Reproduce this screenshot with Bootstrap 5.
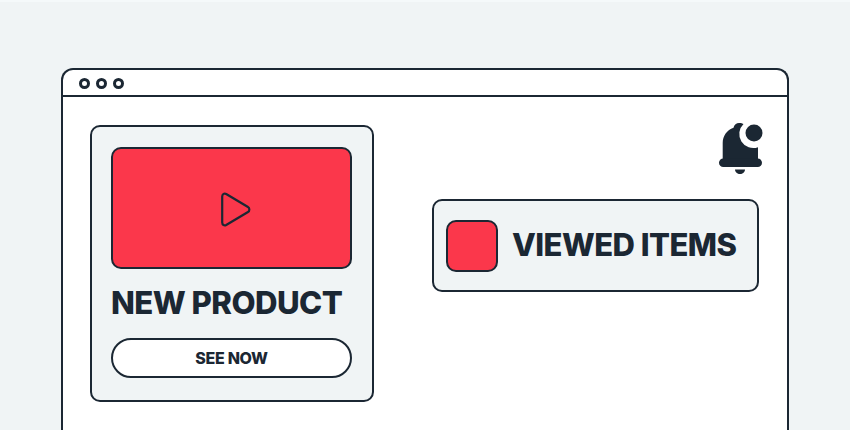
<!DOCTYPE html>
<html lang="en">

<head>
    <meta charset="UTF-8">
    <meta name="viewport" content="width=device-width, initial-scale=1.0">
    <title>Product notification</title>
    <link href="https://cdn.jsdelivr.net/npm/bootstrap@5.3.3/dist/css/bootstrap.min.css" rel="stylesheet">
    <style>
        html, body {
            height: 430px;
            overflow: hidden;
        }

        body {
            background-color: #f0f4f5;
            font-family: Inter, "Liberation Sans", sans-serif;
            color: #1b2733;
            padding: 66px 61px 0;
            border-top: 2px solid #f5f9fa;
        }

        .app-window {
            width: 728px;
            height: 362px;
            background: #fff;
            border: 2px solid #1b2733;
            border-bottom: 0;
            border-radius: 12px 12px 0 0;
        }

        .title-bar {
            height: 27px;
            padding: 2px 0 0 16px;
            gap: 6px;
            border-bottom: 2px solid #1b2733;
        }

        .win-dot {
            width: 11px;
            height: 11px;
            border: 3px solid #1b2733;
            border-radius: 50%;
        }

        .win-content {
            padding: 28px 28px 0 27px;
        }

        .promo-card {
            width: 284px;
            height: 277px;
            padding: 20px 20px 0 19px;
            background: #f0f4f5;
            border: 2px solid #1b2733;
            border-radius: 10px;
        }

        .promo-media {
            height: 122px;
            background: #fb374b;
            border: 2px solid #1b2733;
            border-radius: 10px;
        }

        .promo-title {
            font-size: 31.2px;
            font-weight: 850;
            line-height: 38px;
            letter-spacing: -0.55px;
            margin: 15px 0 16px;
            white-space: nowrap;
        }

        .see-btn {
            height: 40px;
            background: #fff;
            border: 2px solid #1b2733;
            border-radius: 20px;
            color: #1b2733;
            font-size: 16px;
            font-weight: 800;
            letter-spacing: -0.3px;
        }

        .see-btn:hover {
            background: #fff;
            border-color: #1b2733;
            color: #1b2733;
        }

        .side-col {
            width: 327px;
        }

        .bell-icon {
            width: 46px;
            height: 54px;
            margin: -3px -5px 23px 0;
        }

        .viewed-card {
            height: 93px;
            padding-left: 12px;
            gap: 14px;
            background: #f0f4f5;
            border: 2px solid #1b2733;
            border-radius: 10px;
        }

        .viewed-thumb {
            width: 52px;
            height: 52px;
            background: #fb374b;
            border: 2px solid #1b2733;
            border-radius: 10px;
        }

        .viewed-label {
            font-size: 31px;
            font-weight: 850;
            letter-spacing: -0.55px;
            white-space: nowrap;
        }
    </style>
</head>

<body>
    <div class="app-window">
        <div class="title-bar d-flex align-items-center">
            <span class="win-dot"></span>
            <span class="win-dot"></span>
            <span class="win-dot"></span>
        </div>

        <div class="win-content d-flex justify-content-between">
            <!-- product card -->
            <div class="promo-card">
                <div class="promo-media d-flex align-items-center justify-content-center">
                    <svg width="40" height="40" viewBox="0 0 40 40" fill="none" stroke="#1b2733" stroke-width="2.2" stroke-linejoin="round">
                        <path d="M10.200 8.500c0-2.500 2.200-3.600 4-2.500L36 19c1.800 1 1.800 4 0 5L14.200 37c-1.800 1-4 0-4-2.500z" />
                    </svg>
                </div>
                <div class="promo-title">NEW PRODUCT</div>
                <button type="button" class="btn see-btn w-100 d-flex align-items-center justify-content-center">SEE NOW</button>
            </div>

            <div class="side-col d-flex flex-column">
                <div class="d-flex justify-content-end">
                    <svg class="bell-icon" viewBox="0 0 46 54" fill="#1b2733">
                        <path d="M15.500 5.800C16 3 18.500 1 21 1c2 0 3.800.5 4.500 1A14 14 0 0 0 40 25.200V38H4.700V21C4.700 14 9 8 15.500 5.800z" />
                        <rect x="1" y="36.500" width="43" height="8.500" rx="4.250" />
                        <path d="M17 47.500h10c0 2.600-2.300 4.500-5 4.500s-5-1.900-5-4.500z" />
                        <circle cx="36" cy="11" r="8.500" />
                    </svg>
                </div>
                <div class="viewed-card d-flex align-items-center">
                    <div class="viewed-thumb flex-shrink-0"></div>
                    <div class="viewed-label">VIEWED ITEMS</div>
                </div>
            </div>
        </div>
    </div>

    <script src="https://cdn.jsdelivr.net/npm/bootstrap@5.3.3/dist/js/bootstrap.bundle.min.js"></script>
</body>

</html>
